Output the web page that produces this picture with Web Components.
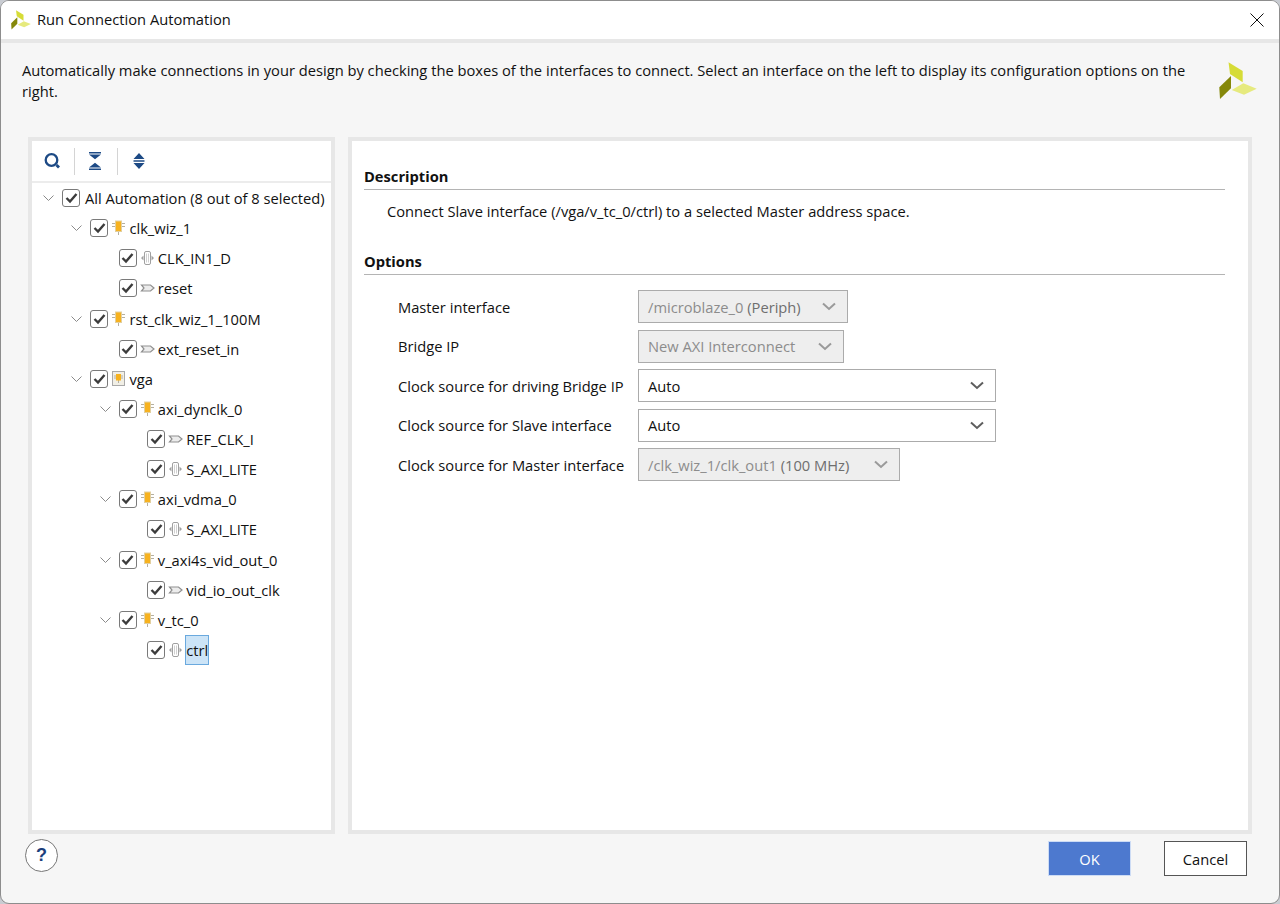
<!DOCTYPE html>
<html>
<head>
<meta charset="utf-8">
<title>Run Connection Automation</title>
<style>
  html, body { margin: 0; height: 100%; }
  body { background: #c9ccd2; font: 14.7px "Open Sans", "Noto Sans", sans-serif; color: #111; overflow: hidden; }
</style>
</head>
<body>
<conn-dialog>
  <tree-row slot="tree" level="0" open>All Automation (8 out of 8 selected)</tree-row>
  <tree-row slot="tree" level="1" open icon="block">clk_wiz_1</tree-row>
  <tree-row slot="tree" level="2" icon="intf">CLK_IN1_D</tree-row>
  <tree-row slot="tree" level="2" icon="pin">reset</tree-row>
  <tree-row slot="tree" level="1" open icon="block">rst_clk_wiz_1_100M</tree-row>
  <tree-row slot="tree" level="2" icon="pin">ext_reset_in</tree-row>
  <tree-row slot="tree" level="1" open icon="hier">vga</tree-row>
  <tree-row slot="tree" level="2" open icon="block">axi_dynclk_0</tree-row>
  <tree-row slot="tree" level="3" icon="pin">REF_CLK_I</tree-row>
  <tree-row slot="tree" level="3" icon="intf">S_AXI_LITE</tree-row>
  <tree-row slot="tree" level="2" open icon="block">axi_vdma_0</tree-row>
  <tree-row slot="tree" level="3" icon="intf">S_AXI_LITE</tree-row>
  <tree-row slot="tree" level="2" open icon="block">v_axi4s_vid_out_0</tree-row>
  <tree-row slot="tree" level="3" icon="pin">vid_io_out_clk</tree-row>
  <tree-row slot="tree" level="2" open icon="block">v_tc_0</tree-row>
  <tree-row slot="tree" level="3" icon="intf" selected>ctrl</tree-row>

  <option-row slot="options" label="Master interface" value="/microblaze_0" note="(Periph)" width="210" disabled></option-row>
  <option-row slot="options" label="Bridge IP" value="New AXI Interconnect" width="206" disabled></option-row>
  <option-row slot="options" label="Clock source for driving Bridge IP" value="Auto" width="358"></option-row>
  <option-row slot="options" label="Clock source for Slave interface" value="Auto" width="358"></option-row>
  <option-row slot="options" label="Clock source for Master interface" value="/clk_wiz_1/clk_out1" note="(100 MHz)" width="262" disabled></option-row>
</conn-dialog>

<script>
const LOGO = `
  <polygon points="9.5,0.3 23.7,9 23.7,20.3 11,12" fill="#d6dc37"/>
  <polygon points="0.3,25.3 12,14 12,26.3 1,37" fill="#85880a"/>
  <polygon points="12.7,28 24.3,21.3 37.7,26.7 25,32.7" fill="#e6ea7e"/>`;

const ICONS = {
  block: `<svg width="16" height="16" viewBox="0 0 16 16">
    <path d="M1 3.500h3.500M1 6.500h3.500M10.500 3.500h3.500M10.500 6.500h3.500M7.500 11v4" stroke="#b5b0a0" fill="none"/>
    <rect x="4.500" y="1" width="6" height="10.500" fill="#f7b21f" stroke="#e2cf9f"/></svg>`,
  hier: `<svg width="16" height="16" viewBox="0 0 16 16">
    <rect x="1.500" y="0.500" width="12" height="14" fill="#f1efe6" stroke="#a9a9a9"/>
    <path d="M3 5h9M3 7h9M7.500 9v3" stroke="#b5b0a0" fill="none"/>
    <rect x="5" y="3" width="5" height="6.500" fill="#f7b21f"/></svg>`,
  intf: `<svg width="16" height="16" viewBox="0 0 16 16">
    <rect x="4.500" y="1.500" width="6" height="13" rx="1.500" fill="#fff" stroke="#a0a0a0"/>
    <path d="M6.500 3.500v9M8.500 3.500v9" stroke="#d0d0d0"/>
    <path d="M3.500 5.500L1 8l2.500 2.500zM11.500 5.500L14 8l-2.500 2.500z" fill="#a0a0a0"/></svg>`,
  pin: `<svg width="16" height="16" viewBox="0 0 16 16">
    <path d="M1.500 5h9L14 8l-3.500 3h-9L4 8z" fill="#ececec" stroke="#8f8f8f" stroke-width="1.200"/></svg>`
};

class ConnDialog extends HTMLElement {
  constructor() {
    super();
    this.attachShadow({mode: 'open'}).innerHTML = `
    <style>
      :host { display: flex; flex-direction: column; box-sizing: border-box; width: 1280px; height: 904px;
        background: #f6f6f6; border: 1px solid #8d8d8d; border-radius: 9px; overflow: hidden; }
      .title { height: 38px; flex: none; background: #fff; display: flex; align-items: center; padding: 0 10px; gap: 6px;
        border-bottom: 4px solid #e7e7e7; }
      .title span { flex: 1; margin-top: -2px; }
      .title svg.close { margin-right: 5px; }
      .intro { height: 94px; flex: none; box-sizing: border-box; padding: 17px 14px 0 21px; display: flex; line-height: 21px; }
      .intro div { flex: 1; padding-right: 24px; }
      .intro svg { margin-top: 2px; margin-right: 8px; flex: none; }
      .main { height: 697px; flex: none; display: flex; gap: 13px; padding: 0 27px; }
      .left, .right { box-sizing: border-box; border: 4px solid #e7e7e7; background: #fff; }
      .left { width: 307px; flex: none; display: flex; flex-direction: column; }
      .tools { height: 40px; flex: none; display: flex; align-items: center; padding-left: 12px; border-bottom: 2px solid #ececec; }
      .tools i { width: 1px; height: 27px; background: #d4d4d4; }
      .tree { display: flex; flex-direction: column; }
      .right { width: 904px; flex: none; padding: 24px 23px 0 12px; }
      .foot { flex: 1; display: flex; align-items: flex-start; padding: 5px 32px 0 24px; }
      .help { width: 31px; height: 31px; border: 1px solid #777; border-radius: 50%; background: #fff; color: #1c3f7c;
        font: bold 18px "Liberation Sans", sans-serif; display: flex; align-items: center; justify-content: center; }
      .gap { flex: 1; }
      .btns { display: flex; gap: 33px; padding-top: 2px; }
      .opts { display: flex; flex-direction: column; gap: 6.500px; padding: 15px 0 0 34px; }
      .desc { margin: 11px 0 29px 23px; line-height: 20px; }
    </style>
    <div class="title">
      <svg width="20" height="20" viewBox="0 0 38 38">${LOGO}</svg>
      <span>Run Connection Automation</span>
      <svg class="close" width="14" height="14" viewBox="0 0 14 14"><path d="M.5.5l13 13M13.500.5l-13 13" stroke="#111" fill="none"/></svg>
    </div>
    <div class="intro">
      <div>Automatically make connections in your design by checking the boxes of the interfaces to connect. Select an interface on the left to display its configuration options on the right.</div>
      <svg width="38" height="38" viewBox="0 0 38 38">${LOGO}</svg>
    </div>
    <div class="main">
      <div class="left">
        <div class="tools">
          <svg width="18" height="18" viewBox="0 0 18 18"><circle cx="7.500" cy="8" r="5.800" fill="none" stroke="#1d4a85" stroke-width="2.300"/><path d="M12.500 13l2.500 2.500" stroke="#1d4a85" stroke-width="2.800"/></svg>
          <i style="margin:0 12px"></i>
          <svg width="16" height="18" viewBox="0 0 16 18"><path d="M2 .8h12M2 17.200h12" stroke="#1d4a85" stroke-width="1.600"/><path d="M2 2.500h12L8 7.300zM2 15.500h12L8 10.700z" fill="#1d4a85"/></svg>
          <i style="margin:0 13px 0 14px"></i>
          <svg width="16" height="18" viewBox="0 0 16 18"><path d="M8 1l5.500 6h-11zM8 17l-5.500-6h11z" fill="#1d4a85"/><path d="M2.500 9h11" stroke="#1d4a85" stroke-width="1.500"/></svg>
        </div>
        <div class="tree"><slot name="tree"></slot></div>
      </div>
      <div class="right">
        <section-head>Description</section-head>
        <div class="desc">Connect Slave interface (/vga/v_tc_0/ctrl) to a selected Master address space.</div>
        <section-head>Options</section-head>
        <div class="opts"><slot name="options"></slot></div>
      </div>
    </div>
    <div class="foot">
      <div class="help">?</div>
      <div class="gap"></div>
      <div class="btns">
        <dlg-button primary>OK</dlg-button>
        <dlg-button>Cancel</dlg-button>
      </div>
    </div>`;
  }
}

class SectionHead extends HTMLElement {
  constructor() {
    super();
    this.attachShadow({mode: 'open'}).innerHTML = `
    <style>
      :host { display: block; font-weight: 700; line-height: 22px; padding-bottom: 2px; border-bottom: 1px solid #b4b4b4; }
    </style><slot></slot>`;
  }
}

class TreeRow extends HTMLElement {
  constructor() {
    super();
    const level = +this.getAttribute('level');
    const open = this.hasAttribute('open');
    const icon = ICONS[this.getAttribute('icon')] || '';
    this.attachShadow({mode: 'open'}).innerHTML = `
    <style>
      :host { display: flex; align-items: center; height: 30.140px; padding-left: calc(${level} * 28.400px + 9px); white-space: nowrap; }
      .chev { width: 21px; flex: none; display: flex; padding-left: 2px; box-sizing: border-box; }
      .box { width: 18px; height: 18px; box-sizing: border-box; flex: none; border: 1.500px solid #7a7a7a; border-radius: 3px; display: flex; align-items: center; justify-content: center; background: #fff; }
      .icon { width: 16px; height: 16px; flex: none; margin-left: 3px; display: flex; }
      .text { margin-left: ${icon ? 2 : 5}px; align-self: stretch; display: flex; align-items: center; box-sizing: border-box; }
      :host([selected]) .text { background: #cce4f7; outline: 1px solid #6aa9de; outline-offset: -1px; padding: 0 1px; margin-left: 1px; }
    </style>
    <span class="chev">${open ? '<svg width="11" height="8" viewBox="0 0 11 8"><path d="M.5 1.500l5 5 5-5" fill="none" stroke="#8a8a8a"/></svg>' : ''}</span>
    <span class="box"><svg width="13" height="12" viewBox="0 0 13 12"><path d="M1.500 6l3.500 3.500 6.500-7.500" fill="none" stroke="#3c3c3c" stroke-width="2.400"/></svg></span>
    ${icon ? `<span class="icon">${icon}</span>` : ''}
    <span class="text"><slot></slot></span>`;
  }
}

class OptionRow extends HTMLElement {
  constructor() {
    super();
    const dis = this.hasAttribute('disabled');
    const note = this.getAttribute('note');
    this.attachShadow({mode: 'open'}).innerHTML = `
    <style>
      :host { display: flex; align-items: center; height: 33px; }
      .label { width: 240px; flex: none; white-space: nowrap; }
      combo-box { width: ${this.getAttribute('width')}px; }
    </style>
    <span class="label">${this.getAttribute('label')}</span>
    <combo-box ${dis ? 'disabled' : ''} ${note ? `note="${note}"` : ''}>${this.getAttribute('value')}</combo-box>`;
  }
}

class ComboBox extends HTMLElement {
  constructor() {
    super();
    const dis = this.hasAttribute('disabled');
    const note = this.getAttribute('note');
    this.attachShadow({mode: 'open'}).innerHTML = `
    <style>
      :host { display: flex; box-sizing: border-box; height: 33px; align-items: center; padding: 0 11px 0 9px; white-space: nowrap;
        border: 1px solid #ababab; background: ${dis ? '#eeeeee' : '#fff'}; color: ${dis ? '#8c8c8c' : '#111'}; }
      span { flex: 1; }
      em { font-style: normal; color: #6f6f6f; }
    </style>
    <span><slot></slot>${note ? ` <em>${note}</em>` : ''}</span>
    <svg width="14" height="9" viewBox="0 0 14 9"><path d="M1 1.500l6 5.500 6-5.500" fill="none" stroke="${dis ? '#9a9a9a' : '#5e5e5e'}" stroke-width="2"/></svg>`;
  }
}

class DlgButton extends HTMLElement {
  constructor() {
    super();
    const primary = this.hasAttribute('primary');
    this.attachShadow({mode: 'open'}).innerHTML = `
    <style>
      :host { display: flex; box-sizing: border-box; width: 83px; height: 35px; align-items: center; justify-content: center;
        background: ${primary ? '#4d79cf' : '#fff'}; color: ${primary ? '#fff' : '#111'};
        border: 1px solid ${primary ? '#cddcf5' : '#555'}; }
    </style><slot></slot>`;
  }
}

customElements.define('section-head', SectionHead);
customElements.define('tree-row', TreeRow);
customElements.define('combo-box', ComboBox);
customElements.define('option-row', OptionRow);
customElements.define('dlg-button', DlgButton);
customElements.define('conn-dialog', ConnDialog);
</script>
</body>
</html>
